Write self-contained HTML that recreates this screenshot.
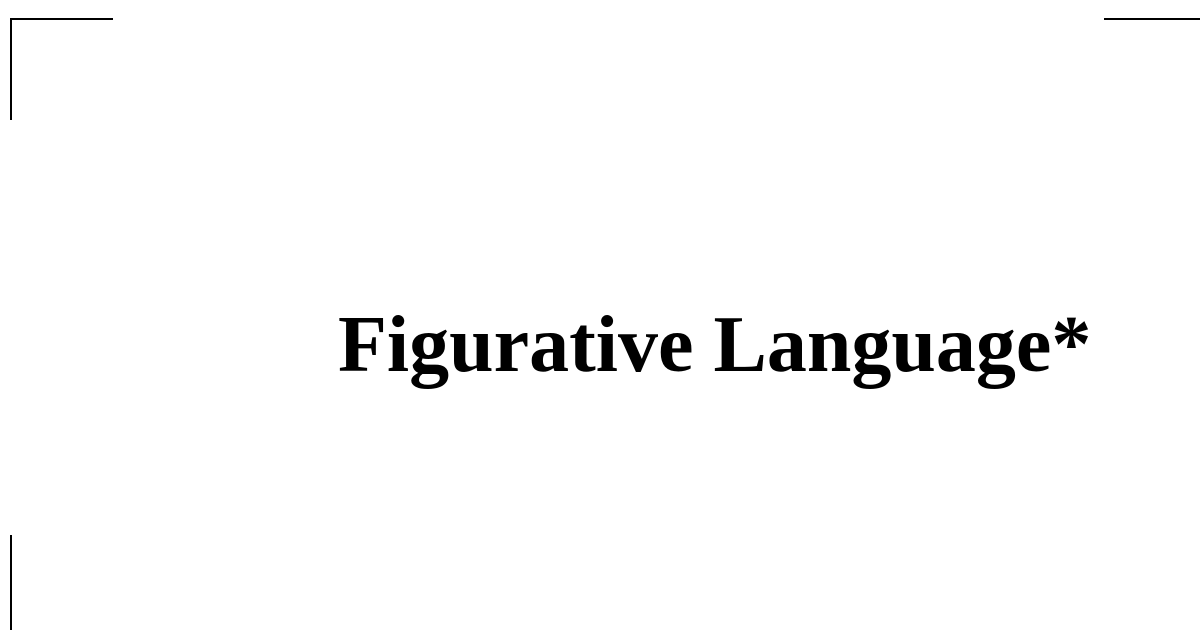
<!DOCTYPE html>
<html><head><style>
html,body{margin:0;padding:0;background:#fff;width:1200px;height:630px;overflow:hidden;position:relative}
.l{position:absolute;background:#000}
.t{position:absolute;left:338px;top:0;font-family:"Liberation Serif",serif;font-weight:bold;font-size:80px;line-height:80px;white-space:nowrap;color:#000}
</style></head><body>
<div class="l" style="left:10px;top:18px;width:103px;height:2px"></div>
<div class="l" style="left:10px;top:18px;width:2px;height:102px"></div>
<div class="l" style="left:1104px;top:18px;width:96px;height:2px"></div>
<div class="l" style="left:10px;top:535px;width:2px;height:95px"></div>
<div class="t" style="top:305px">Figurative Language*</div>
</body></html>
